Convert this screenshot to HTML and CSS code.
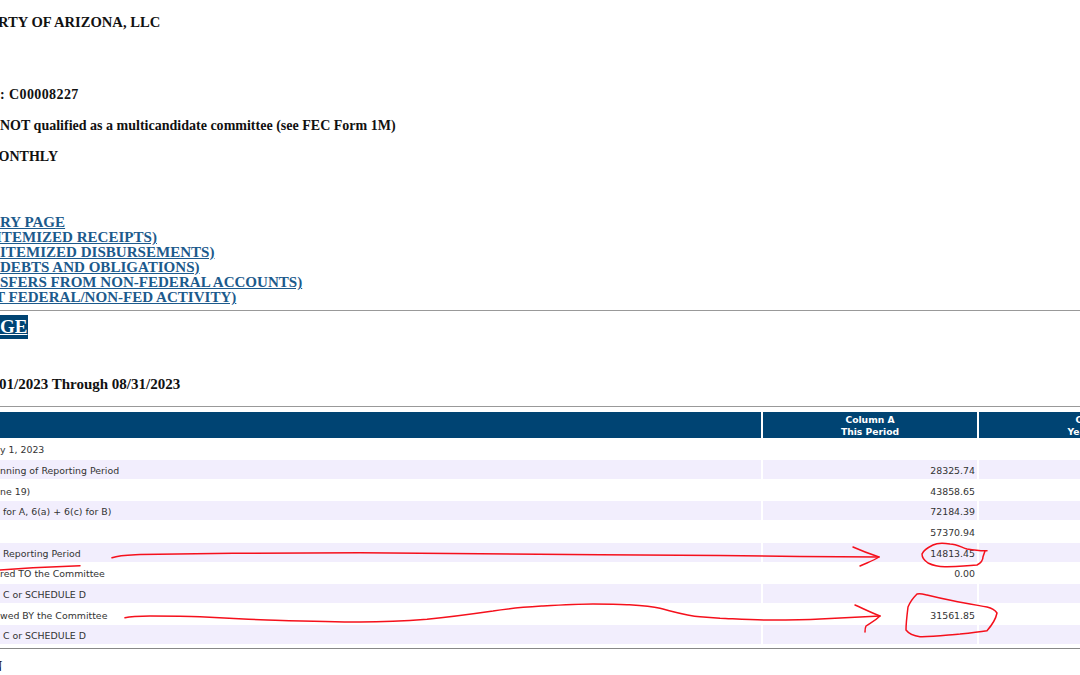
FILE: index.html
```html
<!DOCTYPE html>
<html lang="en">
<head>
<meta charset="utf-8">
<title>Report summary</title>
<link rel="stylesheet" href="styles.css">
</head>
<body>
<main class="page">
  <div class="line title">RTY OF ARIZONA, LLC</div>
  <div class="line id">: C00008227</div>
  <div class="line gap">NOT qualified as a multicandidate committee (see FEC Form 1M)</div>
  <div class="line gap cut-m">MONTHLY</div>
  <nav class="links">
    <a href="#a">RY PAGE</a>
    <a href="#b" class="cut-r">ITEMIZED RECEIPTS)</a>
    <a href="#c">ITEMIZED DISBURSEMENTS)</a>
    <a href="#d">DEBTS AND OBLIGATIONS)</a>
    <a href="#e">SFERS FROM NON-FEDERAL ACCOUNTS)</a>
    <a href="#f" class="cut-t">T FEDERAL/NON-FED ACTIVITY)</a>
  </nav>
  <hr class="rule rule-nav">
  <div class="banner"><span>GE</span></div>
  <div class="line period">01/2023 Through 08/31/2023</div>
  <hr class="rule rule-table">
  <section class="table">
    <div class="th"></div><div class="th">Column A<br>This Period</div><div class="th">Column B<br>Year-To-Date</div>
    <div class="td">y 1, 2023</div><div class="td"></div><div class="td"></div>
    <div class="td alt">nning of Reporting Period</div><div class="td alt num">28325.74</div><div class="td alt"></div>
    <div class="td">ne 19)</div><div class="td num">43858.65</div><div class="td"></div>
    <div class="td alt">&nbsp;for A, 6(a) + 6(c) for B)</div><div class="td alt num">72184.39</div><div class="td alt"></div>
    <div class="td"></div><div class="td num">57370.94</div><div class="td"></div>
    <div class="td alt">&nbsp;Reporting Period</div><div class="td alt num">14813.45</div><div class="td alt"></div>
    <div class="td">red TO the Committee</div><div class="td num">0.00</div><div class="td"></div>
    <div class="td alt">&nbsp;C or SCHEDULE D</div><div class="td alt"></div><div class="td alt"></div>
    <div class="td">wed BY the Committee</div><div class="td num">31561.85</div><div class="td"></div>
    <div class="td alt">&nbsp;C or SCHEDULE D</div><div class="td alt"></div><div class="td alt"></div>
  </section>
  <hr class="rule rule-end">
  <div class="line tail">N</div>
</main>
<svg class="ink" width="1080" height="675" viewBox="0 0 1080 675" aria-hidden="true">
  <path d="M112 557.7C120 555 130 555 140 554.5L233 553.3L360 552.7L480 553.7L600 554.7L720 555.5L800 556.5L879 557"/>
  <path d="M853 547C862 551 870 554 879 557C873 561 866 563 860 566"/>
  <path d="M0 570L33 567.7L80 565.7"/>
  <path d="M125 617.7C132 616 142 616 150 616C170 616 185 616 200 616.7C225 618 245 619 267 620C300 621 330 622 360 622C385 622 405 621 427 619.3C450 617 472 614 493 611C510 608 527 607 543 606C560 605 577 604 593 604C605 604 616 604 627 604.7C640 605.500 650 606 660 608.3C675 612 688 616 700 616.7L720 618.3C737 619 753 620 770 620C787 620 803 620 820 619C840 618 860 617 880 616"/>
  <path d="M855 605C864 609 872 613 880 616C875 621 870 623 866 626C865 628 865 630 865 632"/>
  <path d="M987 550.700C980 551 973 550 967 549C961 547 956 544 950 544C943 543 937 543 933 545C927 548 923 551 922 554C922 558 925 561 928 563C934 566 940 567 947 566.700C957 566.500 968 566 977 565C981 563 983 560 983 556.700L985 551"/>
  <path d="M917 594C913 598 910 602 908 607C907 615 906 623 906 630C909 634 914 636 920 636.700C933 637 947 635 960 634C970 633 979 632 987 630.700C992 625 996 618 997 613C995 610 991 608 987 607C976 605 964 603 953 600.700C944 599 935 597 927 595C923 594 920 593 917 594Z"/>
</svg>
</body>
</html>
```
FILE: styles.css
```css
html, body {
  margin: 0;
  padding: 0;
  height: 675px;
  overflow: hidden;
  background: #fff;
}
.page {
  width: 1300px;
  padding-top: 15px;
  font-family: "Liberation Serif", "DejaVu Serif", serif;
  font-weight: 700;
  font-size: 14.03px;
  color: #111;
}
.line {
  line-height: 15px;
  white-space: nowrap;
}
.title { font-size: 14.6px; margin-left: -2px; }
.id { margin-top: 57px; letter-spacing: 0.4px; }
.gap { margin-top: 16px; }
.cut-m { margin-left: -14.7px; }
.links {
  margin-top: 51px;
  display: flex;
  flex-direction: column;
  font-size: 15.05px;
  line-height: 15.1px;
}
.links a {
  color: #1c5a8c;
  white-space: nowrap;
  text-decoration: underline;
}
.links .cut-r { margin-left: -4px; }
.links .cut-t { margin-left: -5px; }
.rule {
  width: 1080px;
  margin: 0;
  height: 1px;
  border: 0;
  background: #999;
}
.rule-nav { margin-top: 4px; }
.banner {
  margin-top: 4px;
  width: 28px;
  height: 24px;
  background: #004473;
  color: #fff;
  font-size: 19px;
  line-height: 24px;
  text-decoration: underline;
  overflow: hidden;
}
.period { margin-top: 38px; font-size: 15px; margin-left: -1px; }
.rule-table { margin-top: 14px; }
.table {
  margin-top: 5px;
  display: grid;
  grid-template-columns: 761px 214px 242px;
  grid-template-rows: 26px repeat(10, 19px);
  column-gap: 2px;
  row-gap: 1.7px;
  font-family: "DejaVu Sans", Verdana, sans-serif;
  font-weight: 400;
  font-size: 9.4px;
  line-height: 22px;
  color: #333;
}
.th {
  background: #004473;
  color: #fff;
  font-weight: 700;
  font-size: 9.2px;
  text-align: center;
  line-height: 12.5px;
  padding-top: 2px;
  box-sizing: border-box;
}
.td { white-space: nowrap; height: 19px; }
.alt { background: #f2eefd; }
.num { text-align: right; padding-right: 2px; }
.rule-end { margin-top: 4px; background: #888; }
.tail { margin-top: 10px; margin-left: -8px; }
.ink {
  position: absolute;
  left: 0;
  top: 0;
  pointer-events: none;
  fill: none;
  stroke: #f5101c;
  stroke-width: 1.5;
  stroke-linecap: round;
  stroke-linejoin: round;
}
```
